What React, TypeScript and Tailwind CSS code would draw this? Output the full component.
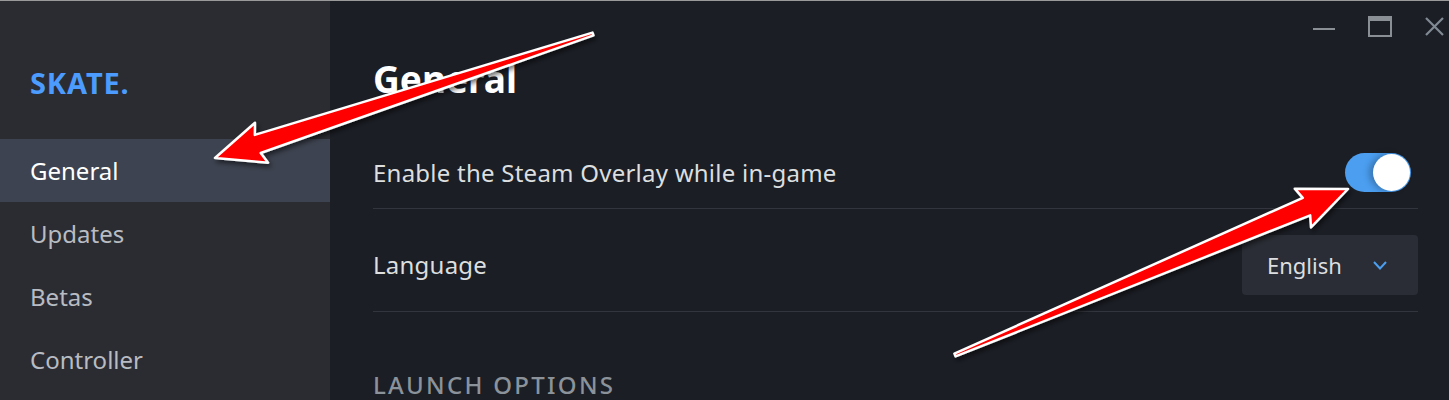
import React from 'react';

type Pt = [number, number];

// tapered annotation arrow: thin tail, wider neck, barbed head
function arrowPoints(tail: Pt, tip: Pt) {
  const dx = tip[0] - tail[0];
  const dy = tip[1] - tail[1];
  const len = Math.hypot(dx, dy);
  const ux = dx / len;
  const uy = dy / len;
  const nx = -uy;
  const ny = ux;
  const at = (along: number, side: number) =>
    `${(tip[0] - ux * along + nx * side).toFixed(1)},${(tip[1] - uy * along + ny * side).toFixed(1)}`;
  return [
    at(len, 1.5),
    at(45, 9.5),
    at(49, 21),
    `${tip[0]},${tip[1]}`,
    at(49, -21),
    at(45, -9.5),
    at(len, -1.5),
  ].join(' ');
}

const navItems = ['General', 'Updates', 'Betas', 'Controller'];

function WindowControls() {
  return (
    <div className="flex items-start justify-end gap-[33px] pt-[15px] pr-[5px] h-[56px]">
      <svg width="22" height="21" viewBox="0 0 22 21">
        <rect x="0" y="12" width="22" height="2" fill="#8a8f96" />
      </svg>
      <svg width="24" height="21" viewBox="0 0 24 21">
        <rect x="1" y="1" width="22" height="19" fill="none" stroke="#8a8f96" strokeWidth="2" />
        <rect x="1" y="1" width="22" height="4" fill="#8a8f96" />
      </svg>
      <svg width="19" height="21" viewBox="0 0 19 21">
        <path d="M1 2 L18 19 M18 2 L1 19" stroke="#7f8a93" strokeWidth="2.2" />
      </svg>
    </div>
  );
}

function Toggle() {
  return (
    <div className="flex items-center justify-end w-[66px] h-[39px] rounded-full bg-[#4b9ef0] p-[1px]">
      <div className="w-[37px] h-[37px] rounded-full bg-white shadow-[-4px_0_6px_rgba(0,0,0,0.25)]" />
    </div>
  );
}

function LanguageSelect() {
  return (
    <div className="flex items-center justify-between w-[176px] h-[60px] rounded-[4px] bg-[#2a2d35] pl-[25px] pr-[31px]">
      <span className="text-[22px] text-[#dcdedf]">English</span>
      <svg width="14" height="9" viewBox="0 0 14 9">
        <path d="M1 1 L7 7.5 L13 1" fill="none" stroke="#4b9ef0" strokeWidth="2" />
      </svg>
    </div>
  );
}

export default function App() {
  return (
    <div className="relative w-[1449px] h-[400px] overflow-hidden border-t border-[#9a9a9a] flex font-['Noto_Sans',sans-serif]">
      {/* sidebar */}
      <aside className="w-[330px] shrink-0 bg-[#2b2c32] flex flex-col">
        <div className="pt-[63px] pl-[30px] h-[138px]">
          <div className="text-[29px] leading-[38px] font-bold tracking-[0.03em] text-[#4c9cff]">SKATE.</div>
        </div>
        {navItems.map((item, i) => (
          <div
            key={item}
            className={
              i === 0
                ? 'h-[63px] flex items-center pl-[30px] bg-[#3d4350] text-[24px] text-white'
                : 'h-[63px] flex items-center pl-[30px] text-[24px] text-[#b8bcc2]'
            }
          >
            {item}
          </div>
        ))}
      </aside>

      {/* main panel */}
      <main className="flex-1 bg-[#1b1e25] flex flex-col">
        <WindowControls />
        <div className="pl-[43px] pr-[31px]">
          <h1 className="text-[37px] leading-[44px] font-bold text-white mb-[35px]">General</h1>

          <div className="flex items-center justify-between pt-[17px] pb-[16px] border-b border-[#32353d]">
            <span className="text-[24px] tracking-[0.01em] text-[#dcdedf]">Enable the Steam Overlay while in-game</span>
            <div className="mr-[7px]">
              <Toggle />
            </div>
          </div>

          <div className="flex items-center justify-between pt-[26px] pb-[16px] border-b border-[#32353d]">
            <span className="text-[24px] tracking-[0.01em] text-[#dcdedf]">Language</span>
            <LanguageSelect />
          </div>

          <div className="mt-[58px] text-[24px] leading-[30px] font-medium tracking-[0.095em] text-[#8b929a]">
            LAUNCH OPTIONS
          </div>
        </div>
      </main>

      {/* annotation arrows */}
      <svg className="absolute inset-0 pointer-events-none" width="1449" height="400" viewBox="0 0 1449 400">
        <defs>
          <filter id="arrowShadow" x="-20%" y="-20%" width="140%" height="140%">
            <feDropShadow dx="2" dy="3" stdDeviation="2.5" floodColor="#000" floodOpacity="0.55" />
          </filter>
        </defs>
        <polygon
          points={arrowPoints([593, 33], [215, 157])}
          fill="#ff0000"
          stroke="#ffffff"
          strokeWidth="2.5"
          strokeLinejoin="round"
          filter="url(#arrowShadow)"
        />
        <polygon
          points={arrowPoints([955, 354], [1348, 188])}
          fill="#ff0000"
          stroke="#ffffff"
          strokeWidth="2.5"
          strokeLinejoin="round"
          filter="url(#arrowShadow)"
        />
      </svg>
    </div>
  );
}
